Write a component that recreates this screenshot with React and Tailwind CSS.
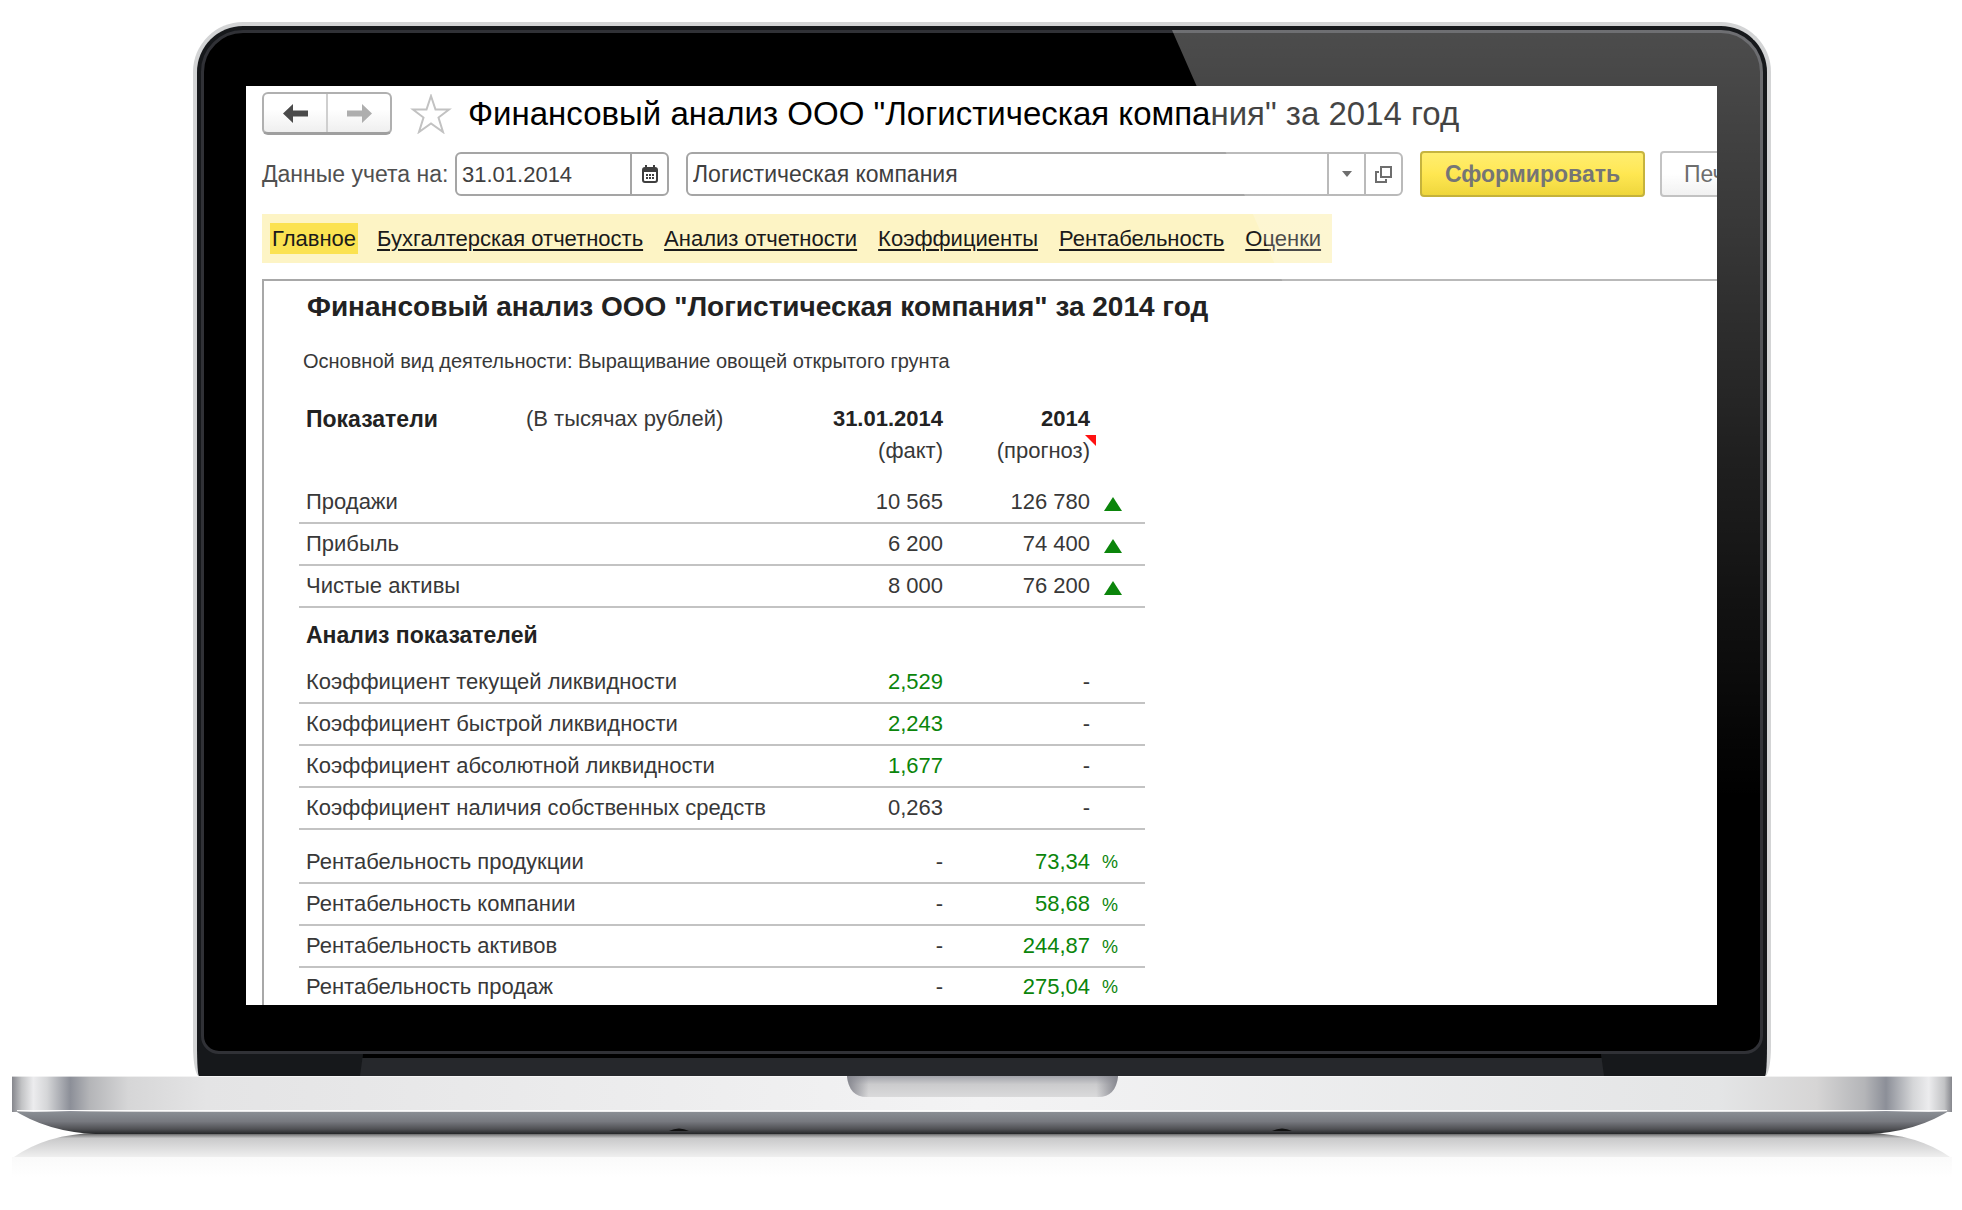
const FONT = "font-['Liberation_Sans',Arial,sans-serif]";

const TABS = [
  'Бухгалтерская отчетность',
  'Анализ отчетности',
  'Коэффициенты',
  'Рентабельность',
  'Оценки',
];

const TOTALS = [
  { name: 'Продажи', fact: '10 565', forecast: '126 780', mark: 'up' },
  { name: 'Прибыль', fact: '6 200', forecast: '74 400', mark: 'up' },
  { name: 'Чистые активы', fact: '8 000', forecast: '76 200', mark: 'up' },
];

const RATIOS = [
  { name: 'Коэффициент текущей ликвидности', fact: '2,529', forecast: '-', good: true },
  { name: 'Коэффициент быстрой ликвидности', fact: '2,243', forecast: '-', good: true },
  { name: 'Коэффициент абсолютной ликвидности', fact: '1,677', forecast: '-', good: true },
  { name: 'Коэффициент наличия собственных средств', fact: '0,263', forecast: '-' },
];

const MARGINS = [
  { name: 'Рентабельность продукции', fact: '-', forecast: '73,34', mark: '%' },
  { name: 'Рентабельность компании', fact: '-', forecast: '58,68', mark: '%' },
  { name: 'Рентабельность активов', fact: '-', forecast: '244,87', mark: '%' },
  { name: 'Рентабельность продаж', fact: '-', forecast: '275,04', mark: '%' },
];

function Arrow({ flip, color }) {
  return (
    <svg width="25" height="19" viewBox="0 0 25 19" className={flip ? 'rotate-180' : ''}>
      <path d="M0 9.500 L10 0 V6.500 H25 V12.500 H10 V19 Z" fill={color} />
    </svg>
  );
}

function CalendarIcon() {
  return (
    <svg width="16" height="18" viewBox="0 0 16 18">
      <rect x="1" y="3" width="14" height="14" rx="2" fill="none" stroke="#3f3f3f" strokeWidth="2" />
      <path d="M1 3 H15 V7 H1 Z" fill="#3f3f3f" />
      <path d="M4 0 V4 M12 0 V4" stroke="#3f3f3f" strokeWidth="2" />
      <path d="M4 10 H13 M4 13 H13" stroke="#3f3f3f" strokeWidth="2" strokeDasharray="2 1" />
    </svg>
  );
}

function NavBar() {
  return (
    <div className="flex items-center">
      <div className="flex h-[43px] w-[130px] shrink-0 rounded-md border-2 border-b-3 border-[#b0b0b0] border-b-[#9f9f9f] bg-linear-to-b from-white from-40% to-[#efefef]">
        <button type="button" aria-label="Назад" className="flex flex-1 items-center justify-center border-r-2 border-[#cfcfcf]">
          <Arrow color="#4a4a4a" />
        </button>
        <button type="button" aria-label="Вперед" className="flex flex-1 items-center justify-center">
          <Arrow flip color="#aeaeae" />
        </button>
      </div>
      <button type="button" aria-label="В избранное" className="ml-[18px] shrink-0">
        <svg width="42" height="40" viewBox="0 0 42 40">
          <path
            d="M21 2 L25.500 15.500 H39 L28.500 23.500 L33 38 L21 29.500 L9 38 L13.500 23.500 L3 15.500 H16.500 Z"
            fill="white"
            stroke="#c2c2c2"
            strokeWidth="2"
          />
        </svg>
      </button>
      <h1 className="ml-4 whitespace-nowrap text-[33px] leading-10 text-black">
        Финансовый анализ ООО "Логистическая компания" за 2014 год
      </h1>
    </div>
  );
}

function Toolbar() {
  return (
    <div className="mt-4 flex items-center text-[23px] text-[#404040]">
      <label htmlFor="date" className="w-[193px] shrink-0 whitespace-nowrap text-[#505050]">
        Данные учета на:
      </label>
      <div className="flex h-11 w-[214px] shrink-0 rounded-md border-2 border-[#a5a5a5]">
        <input id="date" defaultValue="31.01.2014" className="min-w-0 flex-1 px-[5px] text-[22px] outline-none" />
        <button type="button" aria-label="Выбрать дату" className="flex w-[37px] items-center justify-center border-l-2 border-[#a5a5a5]">
          <CalendarIcon />
        </button>
      </div>
      <div className="ml-[17px] flex h-11 min-w-0 flex-1 rounded-md border-2 border-[#a5a5a5]">
        <input aria-label="Организация" defaultValue="Логистическая компания" className="min-w-0 flex-1 px-[5px] outline-none" />
        <button type="button" aria-label="Список" className="flex w-[37px] items-center justify-center border-l-2 border-[#a5a5a5]">
          <svg width="10" height="6" viewBox="0 0 10 6">
            <path d="M0 0 H10 L5 6 Z" fill="#404040" />
          </svg>
        </button>
        <button type="button" aria-label="Открыть" className="flex w-[37px] items-center justify-center border-l-2 border-[#a5a5a5]">
          <svg width="17" height="17" viewBox="0 0 17 17" fill="none" stroke="#404040" strokeWidth="2">
            <rect x="6" y="1" width="10" height="10" />
            <path d="M4 6 H1 V16 H11 V13" />
          </svg>
        </button>
      </div>
      <button
        type="button"
        className="ml-[17px] h-[46px] w-[225px] shrink-0 rounded border-2 border-[#b39b00] bg-linear-to-b from-[#ffe83e] via-[#ffe01a] to-[#eaca00] font-bold text-[#4a4a4a]"
      >
        Сформировать
      </button>
      <div className="ml-[15px] w-[57px] shrink-0 overflow-hidden">
        <button type="button" className="h-[46px] w-[120px] rounded border-2 border-[#b0b0b0] bg-linear-to-b from-white from-50% to-[#ededed] pl-[22px] text-left">
          Печать
        </button>
      </div>
    </div>
  );
}

function Tabs() {
  return (
    <nav className="mt-[17px] flex h-[49px] w-fit shrink-0 items-center gap-[21px] whitespace-nowrap bg-[#fdf4c5] pl-2 pr-[11px] text-[22px] text-[#1a1a1a]">
      <a href="#main" className="-mr-0.5 bg-[#fbe251] px-0.5 leading-[31px]">
        Главное
      </a>
      {TABS.map(tab => (
        <a key={tab} href="#tab" className="underline decoration-2 underline-offset-3">
          {tab}
        </a>
      ))}
    </nav>
  );
}

function Rows({ rows }) {
  return rows.map(({ name, fact, forecast, mark, good }) => (
    <tr key={name} className="h-[42px] border-b-2 border-[#c3c3c3] last:h-[38px] last:border-b-0">
      <th scope="row" className="pl-[7px] text-left font-normal" colSpan="2">
        {name}
      </th>
      <td className={good ? 'text-[#0b850b]' : ''}>{fact}</td>
      <td className={mark === '%' ? 'text-[#0b850b]' : ''}>{forecast}</td>
      <td className="pl-3 text-left text-[#0b850b]">
        {mark === 'up' && (
          <svg width="18" height="14" viewBox="0 0 18 14" className="ml-0.5 mt-1">
            <path d="M9 0 L18 14 H0 Z" fill="#0b850b" />
          </svg>
        )}
        {mark === '%' && <span className="text-[18px]">%</span>}
      </td>
    </tr>
  ));
}

function Report() {
  return (
    <section className="mt-4 border-l-2 border-t-2 border-[#a8a8a8] pl-[35px] text-[#383838]">
      <h2 className="mt-2 pl-2 text-[28px] font-bold leading-9 text-[#222]">
        Финансовый анализ ООО "Логистическая компания" за 2014 год
      </h2>
      <p className="mt-6 pl-1 text-[20px] leading-6">
        Основной вид деятельности: Выращивание овощей открытого грунта
      </p>
      <table className="mt-[30px] w-[846px] table-fixed border-collapse whitespace-nowrap text-right text-[22px] leading-8">
        <colgroup>
          <col className="w-[227px]" />
          <col />
          <col className="w-[218px]" />
          <col className="w-[147px]" />
          <col className="w-[55px]" />
        </colgroup>
        <thead>
          <tr className="h-8 text-[#222]">
            <th className="pl-[7px] text-left text-[23px]">Показатели</th>
            <td className="text-left text-[#383838]">(В тысячах рублей)</td>
            <th>31.01.2014</th>
            <th>2014</th>
            <td />
          </tr>
          <tr className="h-[46px] align-top">
            <td colSpan="2" />
            <td>(факт)</td>
            <td className="relative">
              (прогноз)
              <svg width="11" height="11" viewBox="0 0 11 11" className="absolute -right-1.5 top-0">
                <path d="M0 0 H11 V11 Z" fill="#f11" />
              </svg>
            </td>
            <td />
          </tr>
        </thead>
        <tbody>
          <Rows rows={TOTALS} />
          <tr className="h-[54px] text-[23px] text-[#222]">
            <th colSpan="5" className="pl-[7px] text-left">
              Анализ показателей
            </th>
          </tr>
          <Rows rows={RATIOS} />
          <tr className="h-3">
            <td colSpan="5" />
          </tr>
          <Rows rows={MARGINS} />
        </tbody>
      </table>
    </section>
  );
}

function Base() {
  return (
    <svg viewBox="0 0 1940 134" className="block w-full">
      <defs>
        <linearGradient id="metal">
          <stop offset="0" stopColor="#85868c" />
          <stop offset="0.005" stopColor="#c2c3c5" />
          <stop offset="0.011" stopColor="#ececee" />
          <stop offset="0.018" stopColor="#d5d6d8" />
          <stop offset="0.03" stopColor="#8c8f98" />
          <stop offset="0.04" stopColor="#b4b5b8" />
          <stop offset="0.06" stopColor="#d6d6d7" />
          <stop offset="0.1" stopColor="#e4e4e5" />
          <stop offset="0.5" stopColor="#f3f3f4" />
          <stop offset="0.88" stopColor="#e4e5e6" />
          <stop offset="0.93" stopColor="#d6d5d5" />
          <stop offset="0.955" stopColor="#b4b5b8" />
          <stop offset="0.966" stopColor="#8c8f98" />
          <stop offset="0.98" stopColor="#d5d6d8" />
          <stop offset="0.988" stopColor="#ececee" />
          <stop offset="0.996" stopColor="#c2c3c5" />
          <stop offset="1" stopColor="#85868c" />
        </linearGradient>
        <linearGradient id="under" x2="0" y2="1">
          <stop offset="0" stopColor="#8f949a" />
          <stop offset="0.5" stopColor="#77797f" />
          <stop offset="0.8" stopColor="#505155" />
          <stop offset="1" stopColor="#252628" />
        </linearGradient>
        <linearGradient id="mirror" x2="0" y2="1">
          <stop offset="0" stopColor="#4a4a4b" />
          <stop offset="0.1" stopColor="#8e8e8f" />
          <stop offset="0.22" stopColor="#c9c9ca" />
          <stop offset="1" stopColor="#efefef" />
        </linearGradient>
        <linearGradient id="fade" x2="0" y2="1">
          <stop offset="0" stopColor="#fafafa" />
          <stop offset="1" stopColor="#fff" />
        </linearGradient>
        <linearGradient id="notch" x2="0" y2="1">
          <stop offset="0" stopColor="#a2a3aa" />
          <stop offset="0.4" stopColor="#cbcbcd" />
          <stop offset="1" stopColor="#dadadb" />
        </linearGradient>
        <linearGradient id="notchSides">
          <stop offset="0" stopColor="#85868e" />
          <stop offset="0.08" stopColor="#85868e" stopOpacity="0" />
          <stop offset="0.92" stopColor="#85868e" stopOpacity="0" />
          <stop offset="1" stopColor="#85868e" />
        </linearGradient>
      </defs>
      <path d="M2 81 Q35 58 84 57 H1856 Q1905 58 1938 81 Z" fill="url(#mirror)" />
      <rect y="81" width="1940" height="20" fill="url(#fade)" />
      <rect width="1940" height="36" fill="url(#metal)" />
      <rect y="0" width="1940" height="1" fill="#fff" opacity="0.6" />
      <path d="M0 33 L5 36 H1935 L1940 33 Q1905 56 1856 58 H84 Q35 56 0 33 Z" fill="url(#under)" />
      <rect x="5" y="34" width="1930" height="1" fill="#fbfbfb" />
      <path d="M835 0 H1106 Q1104 21 1086 21 H855 Q837 21 835 0 Z" fill="url(#notch)" />
      <path d="M835 0 H1106 Q1104 21 1086 21 H855 Q837 21 835 0 Z" fill="url(#notchSides)" />
      <path d="M657 55 Q667 50 677 55 Z M1260 55 Q1270 50 1280 55 Z" fill="#111" />
    </svg>
  );
}

export default function App() {
  return (
    <div className={`overflow-hidden bg-white pl-3 pr-[10px] pt-[22px] ${FONT}`}>
      <div className="mx-[181px] rounded-b-[6px_30px] rounded-t-[50px] border-4 border-b-0 border-[#d3d4d5] bg-[#16181b]">
        <div className="relative overflow-hidden rounded-b-[18px] rounded-t-[46px] px-1 pt-1">
          <div className="rounded-b-[18px] rounded-t-[42px] border-[3px] border-[#303136] bg-black pb-[46px] pl-[42px] pr-[43px] pt-[53px]">
            <main className="overflow-hidden bg-white pl-4 pt-1.5">
              <NavBar />
              <Toolbar />
              <Tabs />
              <Report />
            </main>
          </div>
          {/* light falling across the glass */}
          <div className="pointer-events-none absolute inset-x-1 bottom-0 top-1 rounded-t-[42px] bg-linear-to-b from-white/30 via-white/13 via-40% to-transparent to-75% [clip-path:polygon(971px_0,100%_0,100%_100%,1421px_100%)]" />
        </div>
        <div className="px-[163px]">
          <div className="h-[22px] border-t-4 border-black bg-[#26282c] [clip-path:polygon(3px_0,calc(100%-3px)_0,100%_100%,0_100%)]" />
        </div>
      </div>
      <Base />
    </div>
  );
}
